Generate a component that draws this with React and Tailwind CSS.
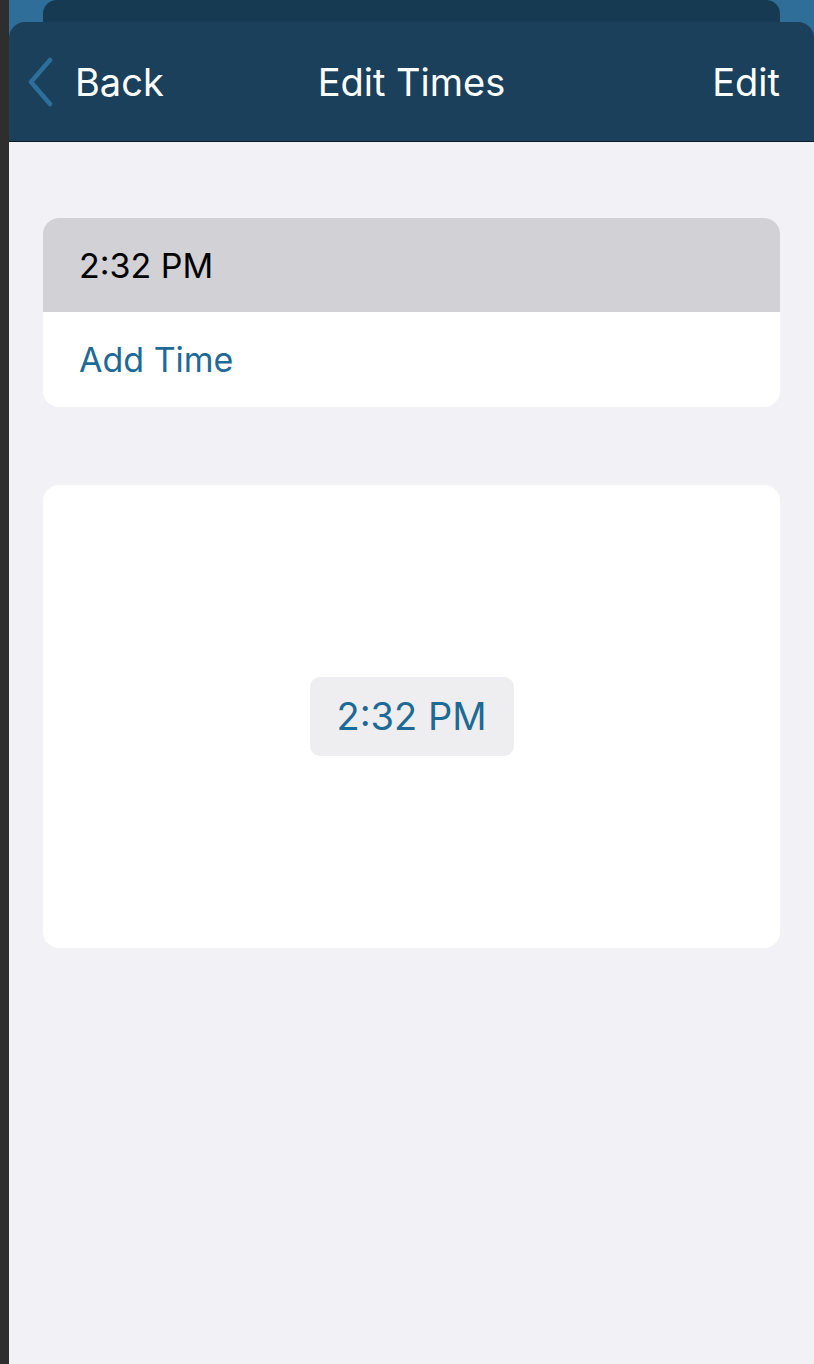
import React from "react";

export default function App() {
  const font = { fontFamily: "Inter, 'Noto Sans', sans-serif" };
  return (
    <div className="flex h-[1364px] w-[814px] overflow-hidden" style={font}>
      <div className="w-[9px] shrink-0 bg-[#2e2e2e]" />
      <div className="flex flex-1 flex-col bg-[#f1f1f6]">
        <div className="bg-[#2f6e99]">
          <div className="mx-[34px] h-[22px] rounded-t-[14px] bg-[#163a52]" />
          <div className="relative flex h-[120px] items-center rounded-t-[16px] border-b border-[#0c1c2c] bg-[#1a405c] px-[9px] text-white">
            <div className="relative z-10 flex items-center">
              <svg width="28" height="50" viewBox="0 0 28 50" className="ml-[8px]">
                <path d="M24 3 L5 25 L24 47" fill="none" stroke="#2e6e9a" strokeWidth="4.5" strokeLinecap="round" strokeLinejoin="round" />
              </svg>
              <span className="ml-[21px] text-[38px] leading-none">Back</span>
            </div>
            <div className="absolute left-0 right-0 text-center text-[38px] leading-none">Edit Times</div>
            <div className="relative z-10 ml-auto mr-[25px] text-[38px] leading-none">Edit</div>
          </div>
        </div>
        <div className="mx-[34px] mt-[76px] overflow-hidden rounded-[16px] bg-white">
          <div className="flex h-[94px] items-center bg-[#d1d1d6] px-[36px] text-[34px] text-black">2:32 PM</div>
          <div className="flex h-[95px] items-center px-[36px] text-[34px] text-[#1e6a97]">Add Time</div>
        </div>
        <div className="mx-[34px] mt-[78px] flex h-[463px] items-center justify-center rounded-[16px] bg-white">
          <div className="flex h-[79px] w-[204px] items-center justify-center rounded-[10px] bg-[#eeeef0] text-[38px] text-[#1e6a97]">2:32 PM</div>
        </div>
      </div>
    </div>
  );
}
